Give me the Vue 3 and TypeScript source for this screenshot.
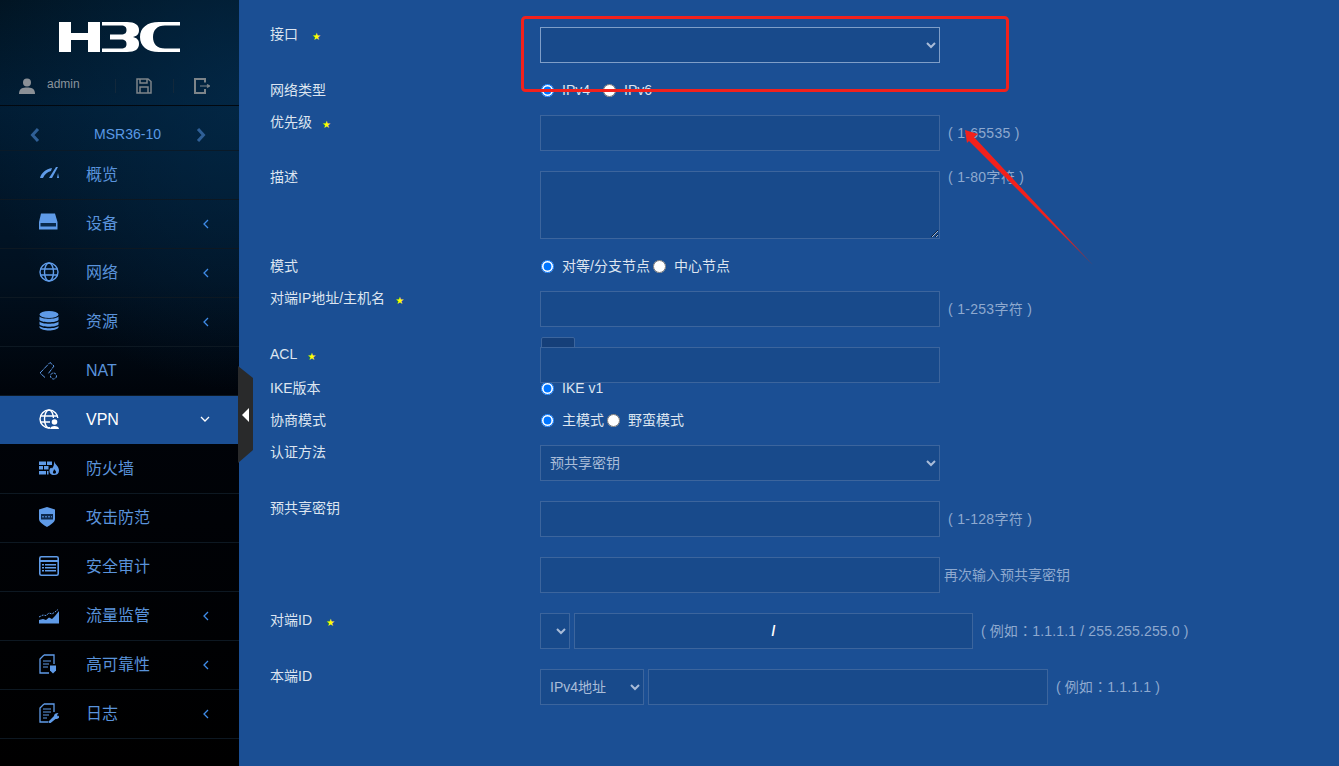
<script setup lang="ts">
interface NavItem { label: string; icon: string; arrow?: boolean; active?: boolean; latin?: boolean }
const navItems: NavItem[] = [
  { label: '概览', icon: '<path d="M1 14C2 9 7 5 13 4L12 7C8 8 6 10 4 14Z" fill="currentColor"/><path d="M10 14L17 3L19 3L13 14Z" fill="currentColor"/><path d="M19 9L20 14H18Z" fill="currentColor"/>' },
  { label: '设备', icon: '<path d="M2 .5H16L18.500 9V16.500H0V9Z" fill="currentColor"/><rect x="1.500" y="10" width="15.500" height="3.500" fill="#0a2a4a"/>', arrow: true },
  { label: '网络', icon: '<g fill="none" stroke="currentColor" stroke-width="1.400"><circle cx="10" cy="10" r="9"/><ellipse cx="10" cy="10" rx="4.500" ry="9"/><path d="M1.500 7H18.500M1.500 13H18.500"/></g>', arrow: true },
  { label: '资源', icon: '<g fill="currentColor"><ellipse cx="10" cy="3.500" rx="9.500" ry="3.500"/><path d="M.5 5.500C3 8.500 17 8.500 19.500 5.500V9C17 12 3 12 .5 9Z"/><path d="M.5 10.500C3 13.500 17 13.500 19.500 10.500V13.500C17 16.500 3 16.500 .5 13.500Z"/><path d="M.5 15C3 18 17 18 19.500 15V16.500C17 20.500 3 20.500 .5 16.500Z"/></g>', arrow: true },
  { label: 'NAT', latin: true, icon: '<g fill="none" stroke="currentColor" stroke-width="1"><path d="M1 13L11 2.500L15 6L9 14M6 17.500L1 13" stroke-dasharray="5 1"/><circle cx="14.500" cy="16" r="3" stroke-dasharray="2.500 1"/></g>' },
  { label: 'VPN', latin: true, icon: '<g fill="none" stroke="currentColor" stroke-width="1.400"><circle cx="10" cy="10" r="9"/><ellipse cx="10" cy="10" rx="4.500" ry="9"/><path d="M1.500 7H18.500M1.500 13H18.500"/></g><rect x="11" y="9" width="10" height="12" fill="#1b4e93"/><circle cx="15.500" cy="13" r="2.800" fill="currentColor"/><path d="M11 20C11 16 20 16 20 20Z" fill="currentColor"/>', arrow: true, active: true },
  { label: '防火墙', icon: '<g fill="currentColor"><rect x="0" y="3.500" width="7" height="3.500"/><rect x="8" y="3.500" width="5" height="3.500"/><rect x="0" y="8" width="4" height="3.500"/><rect x="5" y="8" width="4.500" height="3.500"/><rect x="0" y="13" width="7" height="3.500"/><rect x="8" y="13" width="1.500" height="3.500"/><path d="M15 3C16 7 20 8 20 12.500C20 15.500 18 17 15 17C12 17 10 15 10.500 12C11 10 12.500 9 13 10.500C14.500 9 15.500 6 15 3ZM15 11C15 13 13.500 13.500 14 15C14.500 16 16.500 16 17 14.500C17.300 13 16 12.500 15 11Z" fill-rule="evenodd"/></g>' },
  { label: '攻击防范', icon: '<path d="M8 0L16 2.500V12C16 15.500 11 18 8 20C5 18 0 15.500 0 12V2.500Z" fill="currentColor"/><rect x="2" y="7" width="12" height="5.500" fill="#0e2a4d"/><path d="M3 9.800H13" stroke="currentColor" stroke-dasharray="2 1"/>' },
  { label: '安全审计', icon: '<rect x="0.800" y="0.800" width="18.400" height="18.400" rx="1.500" fill="none" stroke="currentColor" stroke-width="1.600"/><path d="M1 5H19" stroke="currentColor" stroke-width="2"/><g fill="currentColor"><rect x="3" y="8" width="2" height="1.500"/><rect x="3" y="11" width="2" height="1.500"/><rect x="3" y="14" width="2" height="1.500"/><rect x="6" y="8" width="11" height="1.500"/><rect x="6" y="11" width="11" height="1.500"/><rect x="6" y="14" width="11" height="1.500"/></g>' },
  { label: '流量监管', icon: '<path d="M0 18.500V15L4 14L7 15L10 12.500L13 14L16 11L20 6V18.500Z" fill="currentColor"/><path d="M0 12L4 10L7 10.500L10 8L13 9L16 7L19 4.500" fill="none" stroke="currentColor" stroke-dasharray="2 1"/>', arrow: true },
  { label: '高可靠性', icon: '<path d="M5 1H15V10M10 19H1V5L5 1" fill="none" stroke="currentColor" stroke-width="1.300"/><path d="M4 7H12M4 10H10M4 13H9" stroke="currentColor" stroke-width="1.200"/><path d="M11 11.500H17V16.500L14 19.500L11 16.500Z" fill="currentColor"/>', arrow: true },
  { label: '日志', icon: '<path d="M5 1H15V9M9 19H1V5L5 1" fill="none" stroke="currentColor" stroke-width="1.300"/><path d="M4 6H12M4 9H12M4 12H10M4 15H8" stroke="currentColor" stroke-width="1.200"/><path d="M9 19L15 13C15 11 16.500 10 19.500 10L18 12L19 13.500L20.500 12C21 15 19 16 16.500 16L11 20.500Z" fill="currentColor"/>', arrow: true }
]
</script>

<template>
  <div class="page">
    <aside class="side">
      <div class="brand">
        <svg class="logo" width="121" height="30" viewBox="0 0 121 30" aria-label="H3C">
          <g fill="#fff">
            <path d="M0 0H12V11H29V0H41V30H29V18H12V30H0Z" />
            <path d="M43 0H68C76 0 80 3 80 8C80 12 78 14 74 15C78 16 80 18 80 22C80 27 76 30 68 30H43V26.500H62C66 26.500 67.500 25 67.500 22C67.500 19 66 17.500 62 17.500H51V12.500H62C66 12.500 67.500 11 67.500 8C67.500 5 66 3.500 62 3.500H43Z" />
            <path d="M121 0H100C88 0 81 6 81 15C81 24 88 30 100 30H121V26.500H106C98 26.500 94 22 94 15C94 8 98 3.500 106 3.500H121Z" />
          </g>
        </svg>
        <div class="tools">
          <svg class="user" width="16" height="16" viewBox="0 0 16 16"><circle cx="8" cy="4.500" r="4" fill="#8b9096" /><path d="M0 16C0 10 4 9.500 8 9.500C12 9.500 16 10 16 16Z" fill="#8b9096" /></svg>
          <span class="admin">admin</span>
          <i class="sep first"></i>
          <svg class="tool" width="16" height="16" viewBox="0 0 16 16"><path d="M1 1H12L15 3.500V15H1Z M4 1V5H11V1 M4 15V9H12V15" fill="none" stroke="#7d8489" stroke-width="1.500" /></svg>
          <i class="sep"></i>
          <svg class="tool" width="16" height="16" viewBox="0 0 16 16"><path d="M11 4.500V1H1V15H11V11" fill="none" stroke="#7d8489" stroke-width="2" /><path d="M6 8H15M13 6.500L15.500 8L13 9.500" fill="none" stroke="#7d8489" stroke-width="1.200" /></svg>
        </div>
      </div>
      <div class="device">
        <svg width="10" height="16" viewBox="0 0 10 16"><path d="M8 2L2.500 8L8 14" fill="none" stroke="#2f5f96" stroke-width="3" /></svg>
        <span class="device-name">MSR36-10</span>
        <svg width="10" height="16" viewBox="0 0 10 16"><path d="M2 2L7.500 8L2 14" fill="none" stroke="#2f5f96" stroke-width="3" /></svg>
      </div>
      <nav>
        <div v-for="item in navItems" :key="item.label" class="nav-row" :class="{ active: item.active, latin: item.latin }">
          <svg class="nav-icon" width="20" height="20" viewBox="0 0 20 20" v-html="item.icon"></svg>
          <span class="nav-text">{{ item.label }}</span>
          <svg v-if="item.arrow" class="chev" :class="{ down: item.active }" width="6" height="10" viewBox="0 0 6 10"><path d="M5 1L1 5L5 9" fill="none" stroke="currentColor" stroke-width="1.300" /></svg>
        </div>
      </nav>
    </aside>

    <div class="handle"><i></i></div>

    <main class="main">
      <div class="row">
        <label class="label">接口<b class="star wide-gap">★</b></label>
        <select class="ctl wide strong"></select>
      </div>
      <div class="row radios">
        <label class="label">网络类型</label>
        <input type="radio" name="net" checked /><span class="opt">IPv4</span>
        <input class="far" type="radio" name="net2" /><span class="opt">IPv6</span>
      </div>
      <div class="row">
        <label class="label">优先级<b class="star">★</b></label>
        <input class="ctl wide" /><span class="hint">( 1-65535 )</span>
      </div>
      <div class="row">
        <label class="label desc">描述</label>
        <textarea class="ctl wide area"></textarea><span class="hint top">( 1-80字符 )</span>
      </div>
      <div class="row radios">
        <label class="label">模式</label>
        <input type="radio" name="mode" checked /><span class="opt">对等/分支节点</span>
        <input type="radio" name="mode2" /><span class="opt">中心节点</span>
      </div>
      <div class="row">
        <label class="label">对端IP地址/主机名<b class="star">★</b></label>
        <input class="ctl wide" /><span class="hint">( 1-253字符 )</span>
      </div>
      <div class="row acl">
        <label class="label">ACL<b class="star">★</b></label>
        <div class="acl-field">
          <span class="tab"></span>
          <input class="ctl wide" />
        </div>
      </div>
      <div class="row radios">
        <label class="label">IKE版本</label>
        <input type="radio" name="ike" checked /><span class="opt">IKE v1</span>
      </div>
      <div class="row radios">
        <label class="label">协商模式</label>
        <input type="radio" name="nego" checked /><span class="opt">主模式</span>
        <input type="radio" name="nego2" /><span class="opt">野蛮模式</span>
      </div>
      <div class="row">
        <label class="label">认证方法</label>
        <select class="ctl wide"><option>预共享密钥</option></select>
      </div>
      <div class="row">
        <label class="label">预共享密钥</label>
        <input class="ctl wide" /><span class="hint">( 1-128字符 )</span>
      </div>
      <div class="row">
        <label class="label"></label>
        <input class="ctl wide" /><span class="hint again">再次输入预共享密钥</span>
      </div>
      <div class="row">
        <label class="label">对端ID<b class="star wide-gap">★</b></label>
        <select class="ctl tiny"></select>
        <input class="ctl ip" value="/" /><span class="hint example">( 例如：1.1.1.1 / 255.255.255.0 )</span>
      </div>
      <div class="row">
        <label class="label">本端ID</label>
        <select class="ctl small"><option>IPv4地址</option></select>
        <input class="ctl id" /><span class="hint example">( 例如：1.1.1.1 )</span>
      </div>
    </main>

    <svg class="marks" width="1339" height="766" viewBox="0 0 1339 766">
      <defs>
        <linearGradient id="arrowFade" gradientUnits="userSpaceOnUse" x1="965" y1="130" x2="1093" y2="264">
          <stop offset="0" stop-color="#f2211c" />
          <stop offset="0.75" stop-color="#f2211c" />
          <stop offset="1" stop-color="#8a3040" />
        </linearGradient>
      </defs>
      <rect x="522.500" y="17.500" width="485" height="73" rx="3" fill="none" stroke="#f2211c" stroke-width="3" />
      <path d="M965 130L978 134L974 137L1093 265L969 141L967 143Z" fill="url(#arrowFade)" />
    </svg>
  </div>
</template>

<style>
html, body { margin: 0; background: #1b4f94; }
</style>

<style scoped>
.page {
  position: relative;
  display: flex;
  height: 766px;
  overflow: hidden;
  font-family: "Liberation Sans", "Noto Sans CJK SC", sans-serif;
  background: #1b4f94;
}
.side {
  flex: 0 0 239px;
  background:
    radial-gradient(ellipse 260px 300px at 100% 90px, rgba(3, 42, 74, 0.75), transparent),
    linear-gradient(180deg, #011422 0, #011c33 110px, #01101f 280px, #000309 400px, #000 100%);
}
.brand {
  height: 105px;
  border-bottom: 1px solid #02080f;
  display: flex;
  flex-direction: column;
  align-items: flex-start;
}
.logo { margin: 22px 0 0 59px; }
.tools {
  display: flex;
  align-items: center;
  margin-top: 26px;
  height: 16px;
  padding-left: 19px;
}
.admin { font-size: 12px; color: #8a949d; margin-left: 12px; position: relative; top: -2px; width: 33px; }
.sep { width: 1px; height: 14px; background: #12283b; margin: 0 20px 0 21px; }
.sep.first { margin-left: 35px; }
.tool { flex: none; }
.device {
  height: 45px;
  box-sizing: border-box;
  display: flex;
  align-items: center;
  padding: 14px 33px 0 30px;
  justify-content: space-between;
  font-size: 14px;
  color: #5a99e4;
  border-bottom: 1px solid #0a1a28;
}
.device-name { margin-left: 19px; position: relative; top: -1px; }
.nav-row {
  height: 49px;
  box-sizing: border-box;
  border-bottom: 1px solid #0d1822;
  display: flex;
  align-items: center;
  padding-left: 39px;
  color: #5f9be8;
}
.nav-icon { flex: none; margin-bottom: 2px; }
.nav-text { margin-left: 27px; font-size: 16px; color: #5a93db; padding-bottom: 4px; }
.latin .nav-text { padding-bottom: 0; }
.chev { margin-left: auto; margin-right: 30px; color: #3f8ce8; position: relative; top: 0; }
.nav-row.active { background: #1b4f94; color: #fff; border-bottom-color: #000308; }
.nav-row.active .nav-text { color: #fff; }
.nav-row.active .chev { color: #fff; margin-right: 31px; top: -1px; }
.chev.down { transform: rotate(-90deg); }
.handle {
  position: absolute;
  left: 238px;
  top: 366px;
  width: 15px;
  height: 97px;
  background: #292a2b;
  clip-path: polygon(0 0, 100% 12px, 100% 84px, 0 100%);
}
.handle i {
  position: absolute;
  left: 4px;
  top: 42px;
  border-top: 7px solid transparent;
  border-bottom: 7px solid transparent;
  border-right: 7px solid #fff;
}
.main {
  flex: 1;
  padding: 27px 0 0 31px;
  font-size: 14px;
  color: #dde5f0;
}
.row {
  display: flex;
  align-items: flex-start;
  margin-bottom: 20px;
}
.label {
  flex: 0 0 270px;
  line-height: 14px;
}
.label.desc { margin-top: -1px; }
.star {
  display: inline-block;
  width: 8px;
  color: #ffff00;
  font: 700 10px/14px "DejaVu Sans", sans-serif;
  margin-left: 10px;
  position: relative;
  top: 1px;
  text-align: center;
}
.star.wide-gap { margin-left: 14px; }
.ctl {
  box-sizing: border-box;
  height: 36px;
  margin: 0;
  background-color: #184a8b;
  border: 1px solid #3c659d;
  border-radius: 0;
  color: #a9bcd8;
  font: 14px "Liberation Sans", "Noto Sans CJK SC", sans-serif;
  outline: none;
}
select.ctl { padding-left: 5px; }
.wide { width: 400px; }
.strong { border-color: #7f9ec8; }
.area { height: 68px; display: block; resize: vertical; }
.tiny { width: 30px; margin-right: 4px; }
.ip { width: 399px; text-align: center; color: #fff; font-weight: 700; }
.small { width: 104px; margin-right: 4px; }
.id { width: 400px; }
.hint {
  margin-left: 8px;
  line-height: 36px;
  color: #8ea9cf;
  letter-spacing: 0.3px;
}
.hint.top { line-height: 14px; margin-top: -1px; }
.hint.again { margin-left: 4px; letter-spacing: 0; }
.hint.example {
  letter-spacing: 0.15px;
  font-family: "Liberation Sans", "Noto Sans CJK TC", sans-serif;
}
.radios {
  height: 32px;
  margin-bottom: 0;
}
.radios input {
  width: 13px;
  height: 13px;
  margin: 1px 8px 0 1px;
  flex: none;
}
.radios input + .opt + input { margin-left: 3px; }
.radios input + .opt + input.far { margin-left: 13px; }
.opt { line-height: 14px; min-width: 0; }
.acl { margin-bottom: -2px; }
.acl-field { position: relative; }
.acl-field .ctl { display: block; position: relative; }
.tab {
  position: absolute;
  left: 1px;
  top: -10px;
  width: 34px;
  height: 14px;
  box-sizing: border-box;
  background: #153f79;
  border: 1px solid #3c659d;
  border-radius: 2px 2px 0 0;
}
.marks {
  position: absolute;
  left: 0;
  top: 0;
  pointer-events: none;
}
</style>
